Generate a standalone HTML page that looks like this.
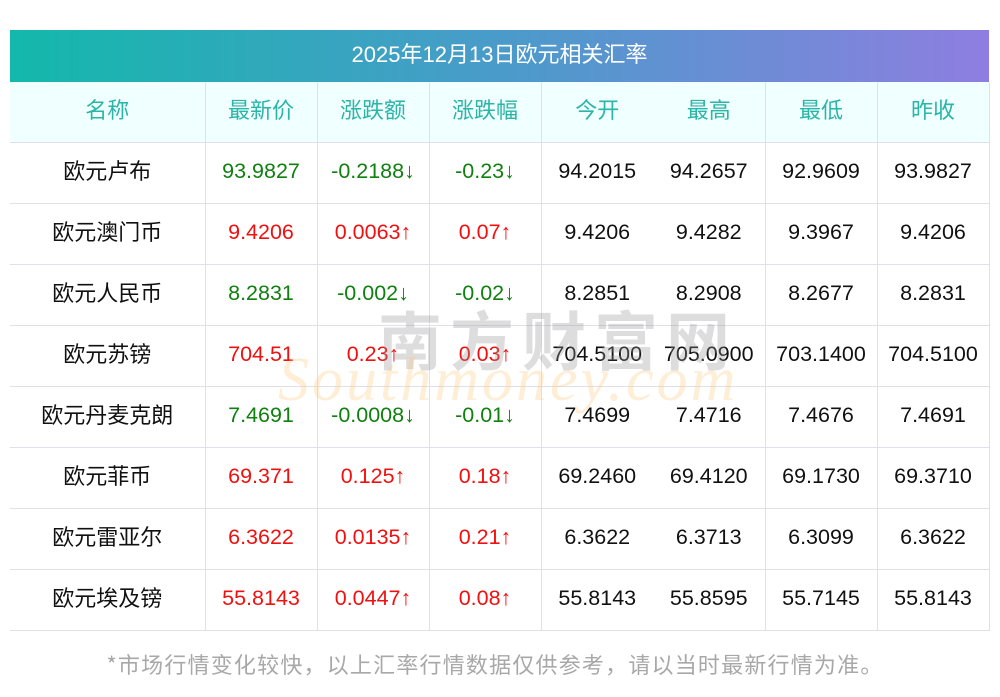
<!DOCTYPE html>
<html><head><meta charset="utf-8"><style>
body{margin:0;width:1000px;height:697px;background:#fff;font-family:"Liberation Sans","Noto Sans CJK SC",sans-serif;position:relative;overflow:hidden}
.title{position:absolute;left:10px;top:30px;width:979px;height:52px;background:linear-gradient(90deg,#13b8ab,#4a9bca 50%,#8e7ee0);color:#fff;font-size:22px;line-height:46px;text-align:center;font-family:"Noto Sans CJK SC","Liberation Sans",sans-serif}
.title span{font-family:"Liberation Sans",sans-serif}
table{position:absolute;left:10px;top:82px;width:979px;border-collapse:collapse;table-layout:fixed}
td{height:56px;padding:0 0 4px 0;border-bottom:1px solid #dfe0ea;border-left:1px solid #dfe0ea;text-align:center;font-size:21.5px;color:#111;white-space:nowrap;line-height:22px}
td:first-child{border-left:none}
td:last-child{border-right:1px solid #dfe0ea}
.c{font-size:22px;font-family:"Noto Sans CJK SC",sans-serif;line-height:22px;display:inline-block}
tr.h td{background:#f0ffff;color:#2ab5a8}
td.nb{border-left:none}
.g{color:#108010}.r{color:#f01010}
.wm1{position:absolute;left:378px;top:292px;font-size:64px;color:rgba(150,150,150,.32);letter-spacing:8px;font-family:"Noto Sans CJK SC",sans-serif;font-weight:bold}
.wm2{position:absolute;left:278px;top:345px;font-size:62px;color:rgba(253,200,120,.3);font-style:italic;font-family:"Liberation Serif",serif;letter-spacing:3px}
.foot{position:absolute;left:0;width:990px;top:648px;text-align:center;color:#a8a8a8;font-size:22px;letter-spacing:1.2px;font-family:"Noto Sans CJK SC",sans-serif;line-height:32px}
</style></head><body>
<div class="title"><span>2025</span>年<span>12</span>月<span>13</span>日欧元相关汇率</div>
<table>
<colgroup><col style="width:195px"><col style="width:112px"><col style="width:112px"><col style="width:112px"><col style="width:112px"><col style="width:112px"><col style="width:112px"><col style="width:112px"></colgroup>
<tr class="h"><td><span class="c">名称</span></td><td><span class="c">最新价</span></td><td><span class="c">涨跌额</span></td><td><span class="c">涨跌幅</span></td><td><span class="c">今开</span></td><td class="nb"><span class="c">最高</span></td><td><span class="c">最低</span></td><td><span class="c">昨收</span></td></tr>
<tr><td><span class="c">欧元卢布</span></td><td class="g">93.9827</td><td class="g">-0.2188↓</td><td class="g">-0.23↓</td><td>94.2015</td><td class="nb">94.2657</td><td>92.9609</td><td>93.9827</td></tr>
<tr><td><span class="c">欧元澳门币</span></td><td class="r">9.4206</td><td class="r">0.0063↑</td><td class="r">0.07↑</td><td>9.4206</td><td class="nb">9.4282</td><td>9.3967</td><td>9.4206</td></tr>
<tr><td><span class="c">欧元人民币</span></td><td class="g">8.2831</td><td class="g">-0.002↓</td><td class="g">-0.02↓</td><td>8.2851</td><td class="nb">8.2908</td><td>8.2677</td><td>8.2831</td></tr>
<tr><td><span class="c">欧元苏镑</span></td><td class="r">704.51</td><td class="r">0.23↑</td><td class="r">0.03↑</td><td>704.5100</td><td class="nb">705.0900</td><td>703.1400</td><td>704.5100</td></tr>
<tr><td><span class="c">欧元丹麦克朗</span></td><td class="g">7.4691</td><td class="g">-0.0008↓</td><td class="g">-0.01↓</td><td>7.4699</td><td class="nb">7.4716</td><td>7.4676</td><td>7.4691</td></tr>
<tr><td><span class="c">欧元菲币</span></td><td class="r">69.371</td><td class="r">0.125↑</td><td class="r">0.18↑</td><td>69.2460</td><td class="nb">69.4120</td><td>69.1730</td><td>69.3710</td></tr>
<tr><td><span class="c">欧元雷亚尔</span></td><td class="r">6.3622</td><td class="r">0.0135↑</td><td class="r">0.21↑</td><td>6.3622</td><td class="nb">6.3713</td><td>6.3099</td><td>6.3622</td></tr>
<tr><td><span class="c">欧元埃及镑</span></td><td class="r">55.8143</td><td class="r">0.0447↑</td><td class="r">0.08↑</td><td>55.8143</td><td class="nb">55.8595</td><td>55.7145</td><td>55.8143</td></tr>
</table>
<div class="wm1">南方财富网</div>
<div class="wm2">Southmoney.com</div>
<div class="foot">*市场行情变化较快，以上汇率行情数据仅供参考，请以当时最新行情为准。</div>
</body></html>
